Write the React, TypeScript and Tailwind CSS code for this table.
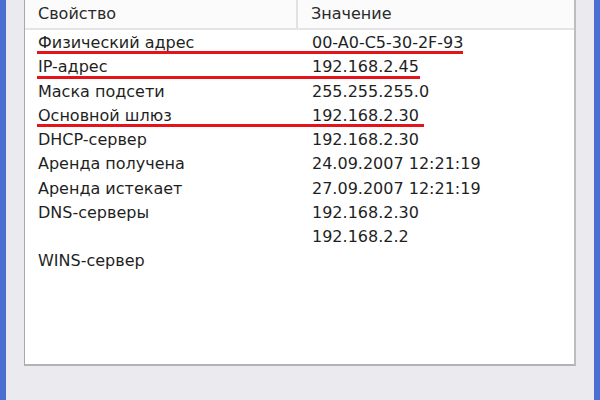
const rows: { name: string; value: string; mark?: number }[] = [
  { name: "Физический адрес", value: "00-A0-C5-30-2F-93", mark: 426 },
  { name: "IP-адрес", value: "192.168.2.45", mark: 383 },
  { name: "Маска подсети", value: "255.255.255.0" },
  { name: "Основной шлюз", value: "192.168.2.30", mark: 387 },
  { name: "DHCP-сервер", value: "192.168.2.30" },
  { name: "Аренда получена", value: "24.09.2007 12:21:19" },
  { name: "Аренда истекает", value: "27.09.2007 12:21:19" },
  { name: "DNS-серверы", value: "192.168.2.30" },
  { name: "", value: "192.168.2.2" },
  { name: "WINS-сервер", value: "" },
];

export default function App() {
  return (
    <div
      className="flex h-[400px] w-[600px] bg-[#4b6fd1] px-[6px] text-[16px] text-[#1f1f1f]"
      style={{ fontFamily: '"DejaVu Sans", Verdana, sans-serif' }}
    >
      <div className="flex-1 bg-[#ebeaef] px-[18px]">
        <div className="h-[366px] border-b-2 border-l border-r-2 border-b-[#b3b2b6] border-l-[#a8a7ab] border-r-[#bdbcc0] bg-white">
          <div className="flex h-[30px] border-b-2 border-[#e4e3e6] bg-[#fbfbfb] text-[#2a2a2a]">
            <div className="flex w-[273px] items-center border-r-2 border-[#e2e2e2] pl-[13px] pb-[1px]">
              Свойство
            </div>
            <div className="flex items-center pl-[13px] pb-[1px]">Значение</div>
          </div>
          <div className="pt-[1px]">
            {rows.map((row, i) => (
              <div key={i} className="relative flex h-[24.25px] leading-[24.25px]">
                <div className="w-[275px] pl-[13px]">{row.name}</div>
                <div className="pl-[12px]">{row.value}</div>
                {row.mark && (
                  <span
                    className="absolute bottom-[1px] left-[12px] h-[3px] bg-[#e3151a]"
                    style={{ width: row.mark }}
                  />
                )}
              </div>
            ))}
          </div>
        </div>
      </div>
    </div>
  );
}
